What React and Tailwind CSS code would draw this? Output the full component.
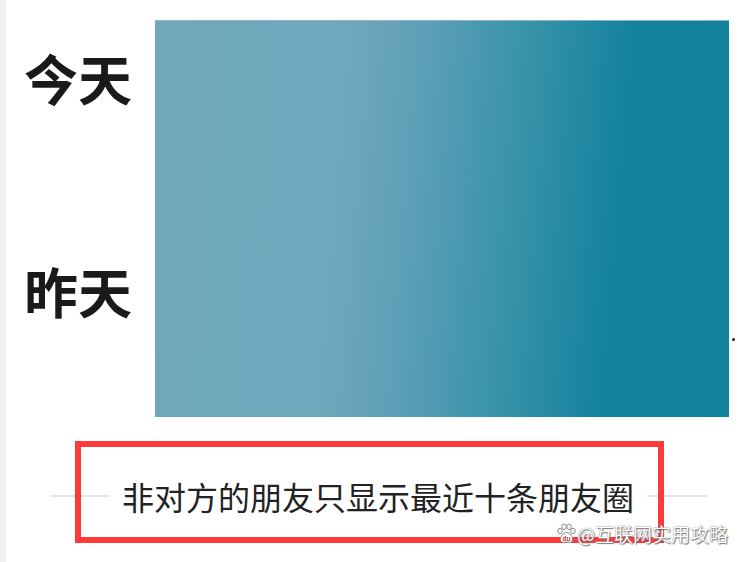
import React from "react";

function Paw() {
  return (
    <svg width="21" height="21" viewBox="0 0 21 21" className="shrink-0">
      <g fill="#ffffff" stroke="#8a8a8a" strokeWidth="1">
        <ellipse cx="4" cy="8" rx="2.2" ry="2.8" />
        <ellipse cx="8" cy="3.8" rx="2.2" ry="2.8" />
        <ellipse cx="13" cy="3.8" rx="2.2" ry="2.8" />
        <ellipse cx="17" cy="8" rx="2.2" ry="2.8" />
        <path d="M10.5 9.5 C7 9.5 4 14 4.5 17 C5 20 8 19.5 10.5 19 C13 19.5 16 20 16.5 17 C17 14 14 9.5 10.5 9.5 Z" />
      </g>
      <text x="10.5" y="18" textAnchor="middle" fontSize="6.5" fontWeight="700" fill="#c0392b" fontFamily="'Liberation Sans', sans-serif">du</text>
    </svg>
  );
}

export default function App() {
  return (
    <div
      className="relative w-[744px] h-[562px] bg-white overflow-hidden flex"
      style={{ fontFamily: "'Noto Sans CJK SC', 'Noto Sans', sans-serif" }}
    >
      <div className="w-[6px] h-full bg-[#f0f0f0] shrink-0" />
      <div className="flex-1 flex flex-col">
        <div className="flex pt-[20px]">
          <div className="w-[149px] shrink-0 flex flex-col pl-[18px]">
            <div className="mt-[31px] text-[54px] leading-none font-bold text-[#1a1a1a]">今天</div>
            <div className="mt-[159px] text-[54px] leading-none font-bold text-[#1a1a1a]">昨天</div>
          </div>
          <div className="w-[574px] h-[397px] shrink-0 bg-[linear-gradient(95deg,#6fa8bb_0%,#6da7bb_34%,#5ea0b7_44%,#3792a9_62%,#13829d_79%,#12819c_100%)] border-t border-[#8ab8c8]" />
        </div>
        <div className="mt-[63px] flex items-center pl-[44px]">
          <div className="w-[60px] h-[2px] bg-[#e6e6e6]" />
          <div className="ml-[12px] mr-[13px] text-[32px] leading-none text-[#222222] whitespace-nowrap">
            非对方的朋友只显示最近十条朋友圈
          </div>
          <div className="w-[60px] h-[2px] bg-[#e6e6e6]" />
        </div>
      </div>

      <div className="absolute left-[75px] top-[441px] w-[589px] h-[102px] border-[6px] border-[#fc3a3a]" />

      <div className="absolute left-[732px] top-[338px] w-[3px] h-[3px] rounded-full bg-[#222]" />

      <div className="absolute left-[556px] top-[523px] flex items-center">
        <Paw />
        <span className="text-[19px] leading-none text-white whitespace-nowrap [text-shadow:0_0_1px_#555,1px_1px_1px_#777]">
          @互联网实用攻略
        </span>
      </div>
    </div>
  );
}
